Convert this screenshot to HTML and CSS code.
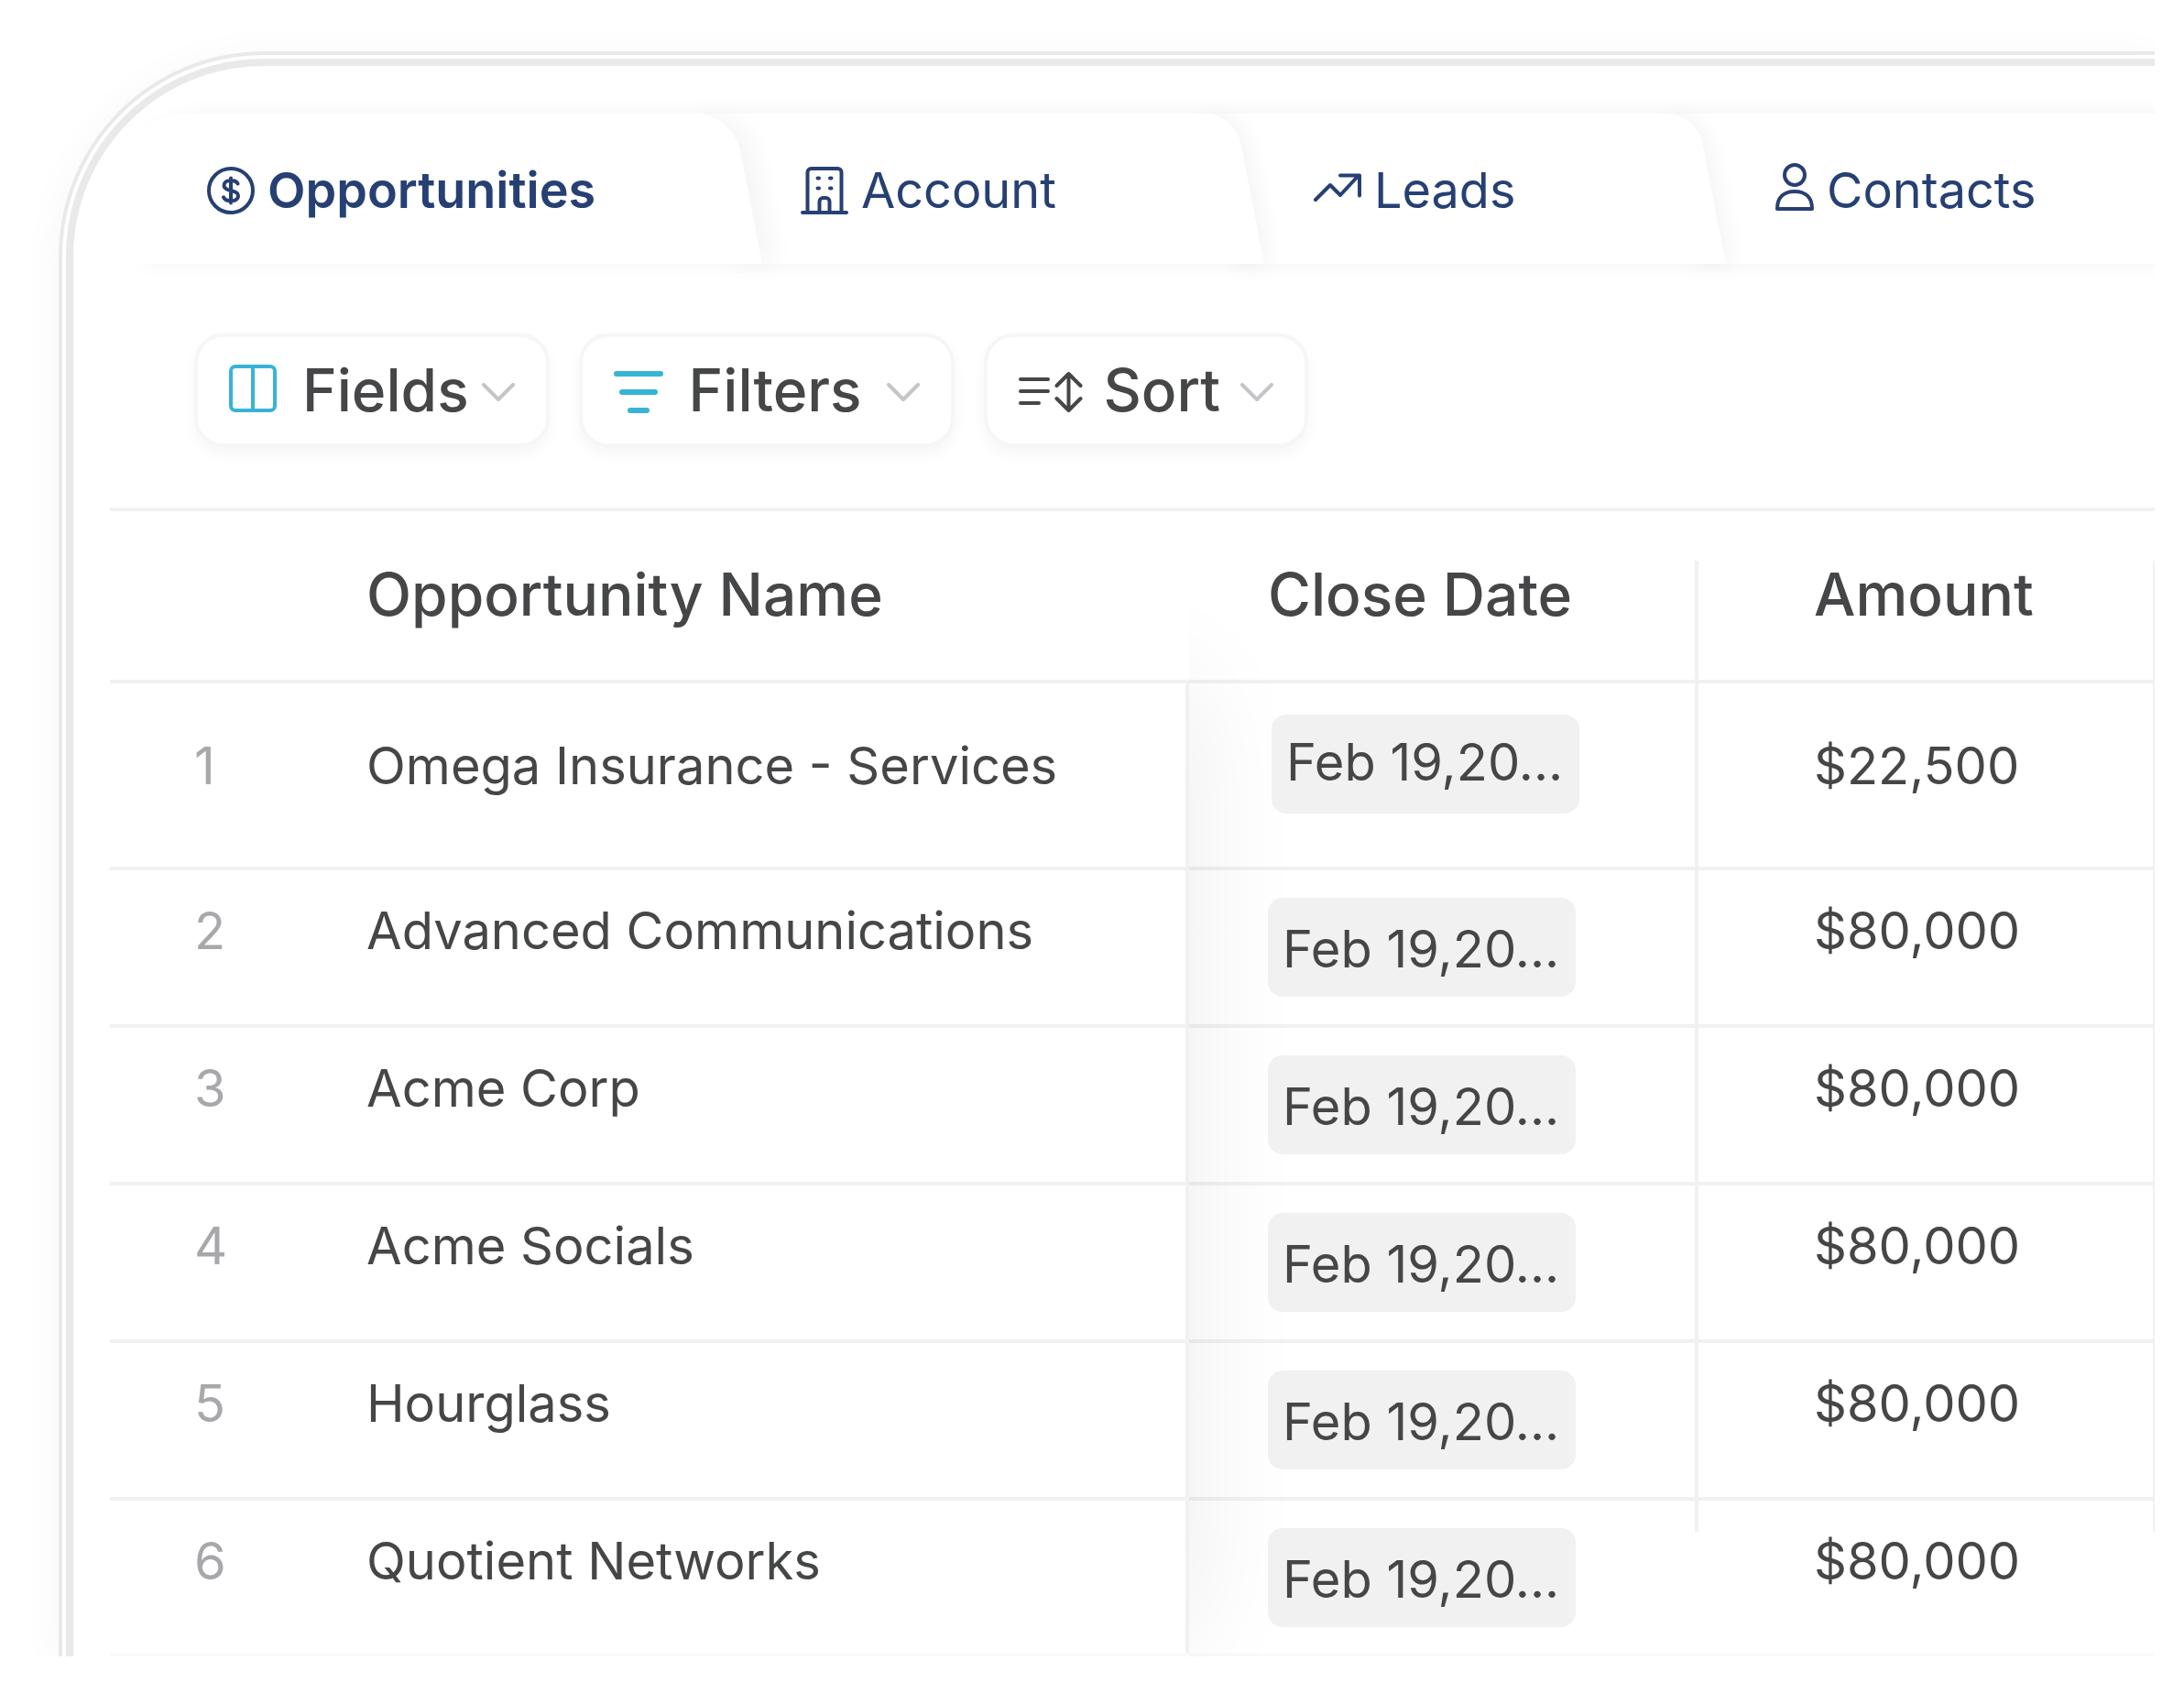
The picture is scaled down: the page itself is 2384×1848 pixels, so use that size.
FILE: index.html
```html
<!DOCTYPE html>
<html lang="en">
<head>
<meta charset="utf-8">
<title>Opportunities</title>
<link rel="stylesheet" href="styles.css">
</head>
<body>
<main class="frame">
  <div class="panel">
    <nav class="tabs" aria-label="Records">
      <a class="tab tab-opportunities" href="#opportunities" aria-current="page">
        <svg class="tab-icon" width="52" height="52" viewBox="0 0 52 52" fill="none" stroke="currentColor" stroke-width="4" stroke-linecap="round" aria-hidden="true"><circle cx="26" cy="26" r="24"/><path d="M26 12.500v27M33.500 18.500c-1-2.200-3.600-3.500-7.500-3.500-4.600 0-7.500 2-7.500 5.400 0 3.400 2.900 4.600 7.500 5.600 5 1 8 2.400 8 5.700 0 3.500-3.200 5.600-8 5.600-4.200 0-7-1.500-8-4"/></svg>
        <span>Opportunities</span>
      </a>
      <a class="tab tab-account" href="#account">
        <svg class="tab-icon" width="52" height="52" viewBox="0 0 52 52" fill="none" stroke="currentColor" stroke-width="4" stroke-linecap="round" stroke-linejoin="round" aria-hidden="true"><path d="M2 50h48M7.500 50V6a4 4 0 0 1 4-4h29a4 4 0 0 1 4 4v44M20.500 50V38a4 4 0 0 1 4-4h3a4 4 0 0 1 4 4v12M18.500 12.500h1.500M32 12.500h1.500M18.500 23.500h1.500M32 23.500h1.500"/></svg>
        <span>Account</span>
      </a>
      <a class="tab tab-leads" href="#leads">
        <svg class="tab-icon" width="52" height="52" viewBox="0 0 52 52" fill="none" stroke="currentColor" stroke-width="4" stroke-linecap="round" stroke-linejoin="round" aria-hidden="true"><path d="M2 36 18 20l11 11L49 9.500M29 9.500h21v22"/></svg>
        <span>Leads</span>
      </a>
      <a class="tab tab-contacts" href="#contacts">
        <svg class="tab-icon tab-icon-person" width="42" height="52" viewBox="0 0 42 52" fill="none" stroke="currentColor" stroke-width="4" stroke-linejoin="round" aria-hidden="true"><circle cx="21" cy="13" r="11"/><path d="M2 50c0-12 6.500-19 19-19s19 7 19 19z"/></svg>
        <span>Contacts</span>
      </a>
    </nav>

    <div class="toolbar">
      <button class="tool tool-fields" type="button">
        <svg class="accent columns-icon" width="52" height="52" viewBox="0 0 52 52" fill="none" stroke="currentColor" stroke-width="4" aria-hidden="true"><rect x="2" y="2" width="48" height="48" rx="5"/><path d="M26 2v48"/></svg>
        <span>Fields</span>
        <svg class="chevron" width="36" height="20" viewBox="0 0 36 20" fill="none" stroke="currentColor" stroke-width="4" stroke-linecap="round" stroke-linejoin="round" aria-hidden="true"><path d="m2 2 16 16L34 2"/></svg>
      </button>
      <button class="tool" type="button">
        <svg class="accent" width="54" height="52" viewBox="0 0 54 52" fill="none" stroke="currentColor" stroke-width="6" stroke-linecap="round" aria-hidden="true"><path d="M3 8h48M9 28h36M18 48h18"/></svg>
        <span>Filters</span>
        <svg class="chevron" width="36" height="20" viewBox="0 0 36 20" fill="none" stroke="currentColor" stroke-width="4" stroke-linecap="round" stroke-linejoin="round" aria-hidden="true"><path d="m2 2 16 16L34 2"/></svg>
      </button>
      <button class="tool tool-sort" type="button">
        <svg width="70" height="52" viewBox="0 0 70 52" fill="none" stroke="currentColor" stroke-width="4" stroke-linecap="round" stroke-linejoin="round" aria-hidden="true"><path d="M2 14h30M2 27h30M2 40h20M54.500 8v40M41.500 21l13-13 13 13M41.500 35l13 13 13-13"/></svg>
        <span>Sort</span>
        <svg class="chevron" width="36" height="20" viewBox="0 0 36 20" fill="none" stroke="currentColor" stroke-width="4" stroke-linecap="round" stroke-linejoin="round" aria-hidden="true"><path d="m2 2 16 16L34 2"/></svg>
      </button>
    </div>

    <div class="grid">
      <table class="records">
        <colgroup><col class="col-index"><col><col class="col-date"><col class="col-amount"></colgroup>
        <thead>
          <tr><th></th><th scope="col">Opportunity Name</th><th class="date" scope="col">Close Date</th><th class="amount" scope="col">Amount</th></tr>
        </thead>
        <tbody>
          <tr class="first"><td class="index">1</td><td>Omega Insurance - Services</td><td class="date"><span class="chip">Feb 19,20...</span></td><td class="amount">$22,500</td></tr>
          <tr><td class="index">2</td><td>Advanced Communications</td><td class="date"><span class="chip">Feb 19,20...</span></td><td class="amount">$80,000</td></tr>
          <tr><td class="index">3</td><td>Acme Corp</td><td class="date"><span class="chip">Feb 19,20...</span></td><td class="amount">$80,000</td></tr>
          <tr><td class="index">4</td><td>Acme Socials</td><td class="date"><span class="chip">Feb 19,20...</span></td><td class="amount">$80,000</td></tr>
          <tr><td class="index">5</td><td>Hourglass</td><td class="date"><span class="chip">Feb 19,20...</span></td><td class="amount">$80,000</td></tr>
          <tr class="last"><td class="index">6</td><td>Quotient Networks</td><td class="date"><span class="chip">Feb 19,20...</span></td><td class="amount">$80,000</td></tr>
        </tbody>
      </table>
      <div class="frozen-shadow"></div>
    </div>
  </div>
</main>
</body>
</html>
```
FILE: styles.css
```css
:root {
  --navy: #264074;
  --ink: #454648;
  --muted: #a7a8ac;
  --accent: #37b3d6;
  --line: #f1f1f1;
  --edge: #e9e9e9;
}

* {
  box-sizing: border-box;
}

body {
  margin: 0;
  padding: 56px 32px 40px 64px;
  background: #fff;
  color: var(--ink);
  font-family: Inter, "Liberation Sans", sans-serif;
  font-size: 56px;
  line-height: 68px;
}

svg {
  display: block;
  flex: none;
}

/* Double outline, open on the right and at the bottom */
.frame {
  padding: 4px 0 0 4px;
  border: solid var(--edge);
  border-width: 4px 0 0 4px;
  border-top-left-radius: 224px;
  box-shadow: 0 8px 48px rgba(0, 0, 0, .04);
  clip-path: inset(-56px 0 0 -64px);
}

.panel {
  padding-top: 52px;
  border: solid var(--edge);
  border-width: 8px 0 0 8px;
  border-top-left-radius: 216px;
}

.tabs {
  display: flex;
  isolation: isolate;
  overflow: clip;
  overflow-clip-margin: 40px;
  font-size: 54px;
}

.tab {
  position: relative;
  display: flex;
  align-items: center;
  gap: 14px;
  height: 164px;
  padding-top: 4px;
  padding-left: 54px;
  color: var(--navy);
  text-decoration: none;
}

.tab::before {
  content: "";
  position: absolute;
  inset: 0 0 0 -40px;
  z-index: -1;
  border-top-right-radius: 32px;
  background: #fff;
  box-shadow: 6px 0 24px rgba(0, 0, 0, .05);
  transform: skewX(11deg);
  transform-origin: bottom;
}

.tab-opportunities {
  z-index: 4;
  width: 752px;
  padding-left: 146px;
  font-weight: 600;
}

.tab-opportunities::before {
  left: 60px;
  border-top-left-radius: 100px;
  border-top-right-radius: 40px;
  box-shadow: 16px 0 24px rgba(0, 0, 0, .04);
}

.tab-account {
  z-index: 3;
  width: 548px;
  padding-left: 42px;
}

.tab-leads {
  z-index: 2;
  width: 504px;
}

.tab-contacts {
  z-index: 1;
  flex: 1;
}

.tab-contacts::before {
  right: -80px;
}

.tab-icon-person {
  margin-bottom: 8px;
}

.toolbar {
  display: flex;
  gap: 32px;
  padding: 76px 0 66px 132px;
}

.tool {
  display: flex;
  align-items: center;
  gap: 28px;
  height: 124px;
  padding: 0 34px;
  border: 4px solid #f6f6f6;
  border-radius: 32px;
  background: #fff;
  box-shadow: 0 8px 16px rgba(0, 0, 0, .04);
  color: var(--ink);
  font: 500 64px/76px Inter, "Liberation Sans", sans-serif;
}

.tool-fields {
  gap: 14px;
}

.tool-sort {
  gap: 22px;
}

.accent {
  color: var(--accent);
}

.columns-icon {
  margin: 0 14px 4px 0;
}

.chevron {
  margin-top: 4px;
  color: #c4c5c8;
}

.grid {
  position: relative;
  margin-left: 40px;
}

.records {
  width: 100%;
  border-top: 4px solid var(--line);
  border-collapse: separate;
  border-spacing: 0;
  table-layout: fixed;
}

.col-index {
  width: 280px;
}

.col-date {
  width: 556px;
}

.col-amount {
  width: 502px;
}

th,
td {
  height: 172px;
  padding: 32px 0 0;
  border-bottom: 4px solid var(--line);
  text-align: left;
  vertical-align: top;
  white-space: nowrap;
}

th {
  height: 188px;
  padding-top: 53px;
  font-size: 64px;
  font-weight: 500;
  line-height: 76px;
}

.first td {
  height: 204px;
  padding-top: 56px;
}

.last td {
  height: 170px;
  border-bottom-color: #fafafa;
}

.index {
  padding-left: 92px;
  color: var(--muted);
}

/* Column rules are painted as backgrounds so that they can stop short of a cell */
td.date,
.amount {
  background: linear-gradient(var(--line), var(--line)) left top / 4px 100% no-repeat;
}

.date {
  padding-left: 90px;
}

td.date {
  padding-top: 30px;
}

.first td.date {
  padding-top: 34px;
  padding-left: 94px;
}

.amount {
  padding-left: 130px;
  background:
    linear-gradient(var(--line), var(--line)) left top / 4px 100% no-repeat,
    linear-gradient(var(--line), var(--line)) right top / 2px 100% no-repeat;
}

th.amount {
  background-position: left bottom, right bottom;
  background-size: 4px 130px, 2px 130px;
}

.last .amount {
  background-size: 4px 34px, 2px 34px;
}

.chip {
  position: relative;
  z-index: 1;
  display: block;
  width: 336px;
  height: 108px;
  padding: 22px 0 0 16px;
  border-radius: 16px;
  background: var(--line);
}

.first .chip {
  padding-top: 18px;
}

.frozen-shadow {
  position: absolute;
  top: 60px;
  right: 902px;
  bottom: 0;
  width: 152px;
  overflow: hidden;
  pointer-events: none;
}

.frozen-shadow::before {
  content: "";
  position: absolute;
  top: 130px;
  right: 100%;
  bottom: 20px;
  width: 300px;
  box-shadow: 0 0 130px rgba(0, 0, 0, .08);
}
```
